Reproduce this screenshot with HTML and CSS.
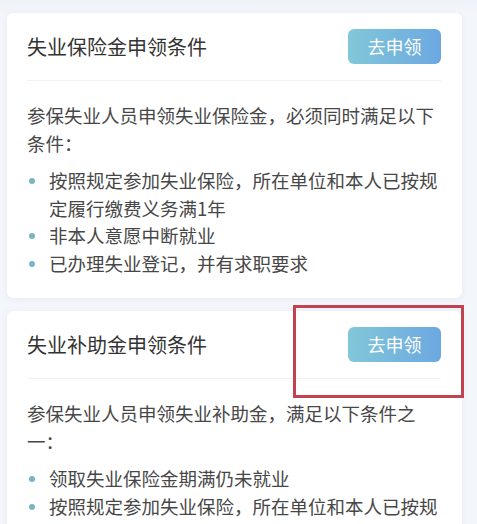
FILE: index.html
```html
<!DOCTYPE html>
<html lang="zh-CN">
<head>
<meta charset="utf-8">
<title>失业保险申领条件</title>
<link rel="stylesheet" href="styles.css">
</head>
<body>
<div class="page">
  <section class="card">
    <div class="card-head">
      <h2 class="card-title">失业保险金申领条件</h2>
      <button class="apply-btn">去申领</button>
    </div>
    <p class="intro">参保失业人员申领失业保险金，必须同时满足以下条件：</p>
    <ul class="conds">
      <li>按照规定参加失业保险，所在单位和本人已按规定履行缴费义务满1年</li>
      <li>非本人意愿中断就业</li>
      <li>已办理失业登记，并有求职要求</li>
    </ul>
  </section>
  <section class="card card--marked">
    <div class="card-head">
      <h2 class="card-title">失业补助金申领条件</h2>
      <button class="apply-btn">去申领</button>
    </div>
    <p class="intro">参保失业人员申领失业补助金，满足以下条件之一：</p>
    <ul class="conds">
      <li>领取失业保险金期满仍未就业</li>
      <li>按照规定参加失业保险，所在单位和本人已按规定履行缴费义务不满1年</li>
    </ul>
    <span class="mark"></span>
  </section>
</div>
</body>
</html>
```
FILE: styles.css
```css
html, body {
  margin: 0;
  padding: 0;
}
body {
  background: #f3f6fa;
  font-family: "Noto Sans CJK SC", "Noto Sans", sans-serif;
  color: #444;
  overflow: hidden;
}
.page {
  padding: 13px 15px 0 7px;
  display: flex;
  flex-direction: column;
  gap: 13px;
  background: linear-gradient(#edf3fa 0, #f3f6fa 14px);
}
.card {
  position: relative;
  background: #fff;
  border-radius: 6px;
  padding: 16px 21px 21px 20px;
  box-shadow: 0 1px 6px rgba(170, 190, 220, 0.18);
}
.card-head {
  display: flex;
  align-items: center;
  justify-content: space-between;
  padding-bottom: 16px;
  border-bottom: 1px solid #eff1f4;
}
.card-title {
  margin: 0;
  font-size: 20px;
  font-weight: 400;
  line-height: 35px;
  color: #333;
}
.apply-btn {
  width: 93px;
  height: 35px;
  border: 0;
  border-radius: 6px;
  background: linear-gradient(90deg, #82c7d9 0%, #6ba8e1 100%);
  color: #fff;
  font-family: inherit;
  font-size: 18px;
  line-height: 35px;
  padding: 0;
}
.intro {
  margin: 20px 0 10px;
  font-size: 18.5px;
  line-height: 28px;
  color: #474747;
}
.conds {
  list-style: none;
  margin: 0;
  padding: 0;
}
.conds li {
  position: relative;
  padding-left: 22px;
  font-size: 18.5px;
  line-height: 27.5px;
  color: #474747;
}
.conds li::before {
  content: "";
  position: absolute;
  left: 2px;
  top: 11px;
  width: 6px;
  height: 6px;
  border-radius: 50%;
  background: #7ab3c8;
}
.mark {
  position: absolute;
  left: 286px;
  top: -6px;
  width: 165px;
  height: 87px;
  border: 3px solid #c2434f;
  pointer-events: none;
}
```
